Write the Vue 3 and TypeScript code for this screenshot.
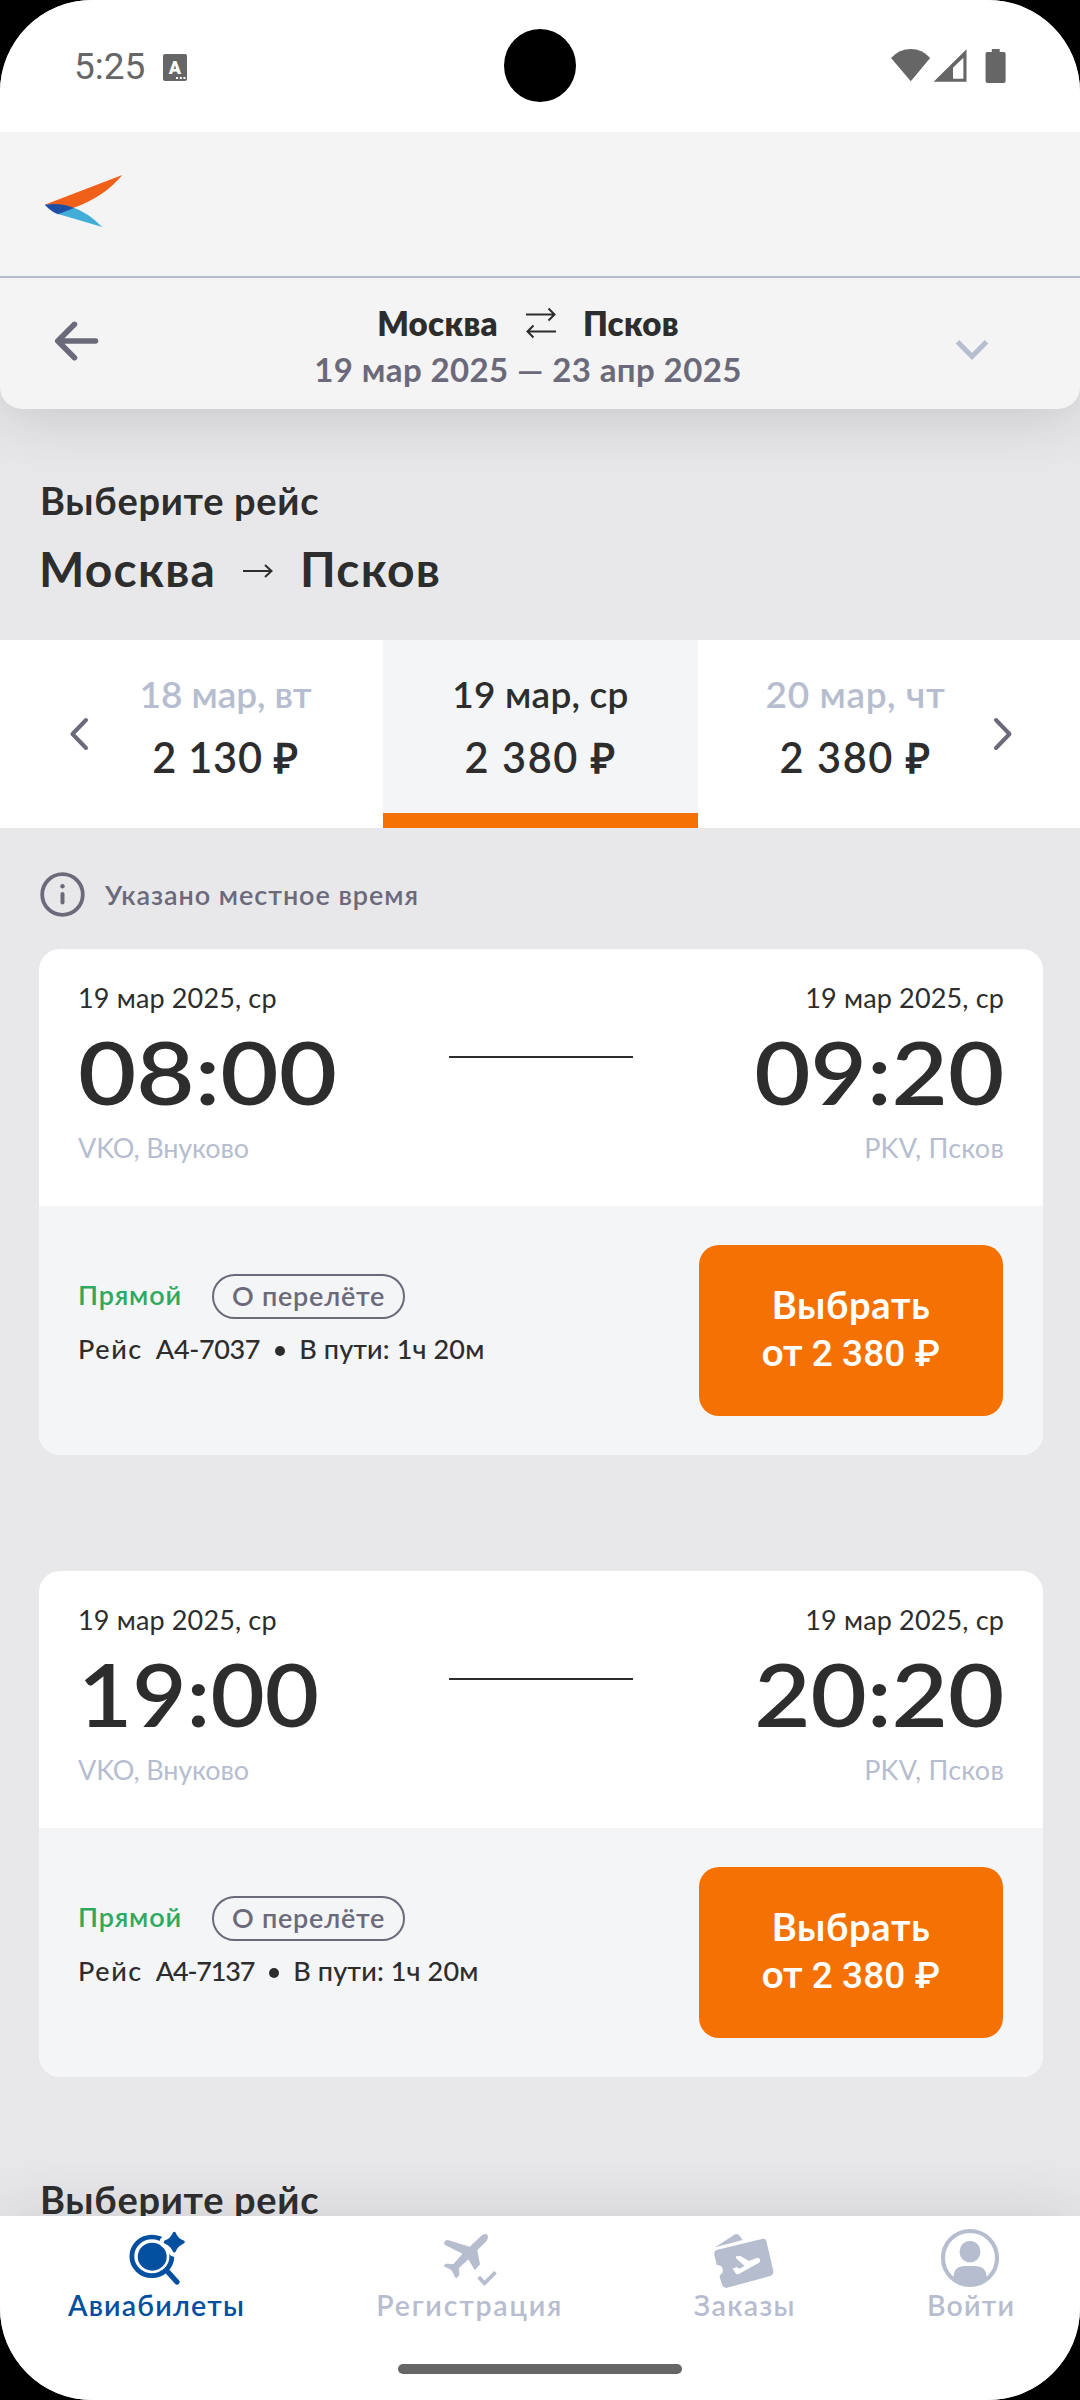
<script setup lang="ts">
interface DayPrice { date: string; price: string; active: boolean; dateSpacing: number; priceSpacing: number }
interface Clock { text: string; stretch: number }
interface Flight { number: string; numberSpacing: number; departure: Clock; arrival: Clock }
interface Tab { id: string; label: string; spacing: number; active: boolean }

const days: DayPrice[] = [
  { date: '18 мар, вт', price: '2 130 ₽', active: false, dateSpacing: -0.1, priceSpacing: 0.8 },
  { date: '19 мар, ср', price: '2 380 ₽', active: true, dateSpacing: 0.2, priceSpacing: 1.6 },
  { date: '20 мар, чт', price: '2 380 ₽', active: false, dateSpacing: 0.6, priceSpacing: 1.6 },
]

const flights: Flight[] = [
  { number: 'A4-7037', numberSpacing: -0.35, departure: { text: '08:00', stretch: 1.15 }, arrival: { text: '09:20', stretch: 1.11 } },
  { number: 'A4-7137', numberSpacing: -1.2, departure: { text: '19:00', stretch: 1.07 }, arrival: { text: '20:20', stretch: 1.11 } },
]

const tabs: Tab[] = [
  { id: 'search', label: 'Авиабилеты', spacing: 1.2, active: true },
  { id: 'checkin', label: 'Регистрация', spacing: 1.8, active: false },
  { id: 'orders', label: 'Заказы', spacing: 1.4, active: false },
  { id: 'profile', label: 'Войти', spacing: 1.2, active: false },
]

const px = (n: number) => `${n}px`
</script>

<template>
  <div class="device">
    <div class="screen">
      <div class="status">
        <span class="clock">5:25</span>
        <svg class="app-badge" viewBox="0 0 24 27">
          <rect width="24" height="27" rx="2" fill="#666" />
          <text x="12" y="19.500" text-anchor="middle" font-family="Roboto, sans-serif" font-weight="900" font-size="18" fill="#fff">A</text>
          <path d="M13 24h2M16.800 24h2M20.400 24h2" stroke="#fff" stroke-width="2.200" />
        </svg>
        <div class="camera"></div>
        <svg class="system-icons" viewBox="1016 144 338 108" preserveAspectRatio="none" fill="#666">
          <path d="M1019 174Q1043 147 1076 147T1132 174L1076 244Z" />
          <path fill-rule="evenodd" d="M1142 245L1237 148V245ZM1198 203V236H1228V173Z" />
          <path d="M1310 147H1333V156H1345Q1350 156 1350 161V243Q1350 249 1344 249H1298Q1292 249 1292 243V161Q1292 156 1297 156H1310Z" />
        </svg>
      </div>

      <header class="brand">
        <svg class="logo" viewBox="130 522 232 162" preserveAspectRatio="none">
          <path fill="#f16019" d="M132 614L357 525Q306 590 215 624Q180 611 132 614Z" />
          <path fill="#42aed8" d="M213 622Q256 637 299 681L171 642Z" />
          <path fill="#1f4fa3" d="M132 614Q180 607 217 624L171 643Q150 634 132 614Z" />
        </svg>
      </header>

      <div class="summary">
        <button class="back" aria-label="Назад">
          <svg viewBox="0 0 44 40" fill="none" stroke="#6b6a7b" stroke-width="5.500" stroke-linecap="round" stroke-linejoin="round">
            <path d="M40.500 20H2.800M19.500 3.300L2.800 20L19.500 36.700" />
          </svg>
        </button>
        <div class="trip">
          <div class="trip-route">
            <span>Москва</span>
            <svg class="swap" viewBox="0 0 30 28" fill="none" stroke="#2d2d2d" stroke-width="2">
              <path d="M0 7.500H28M22.500 1.500L28.500 7.500L22.500 13.500M30 24.500H2M7.500 18.500L1.500 24.500L7.500 30.500" />
            </svg>
            <span>Псков</span>
          </div>
          <div class="trip-dates">19 мар 2025 — 23 апр 2025</div>
        </div>
        <svg class="expand" viewBox="0 0 32 20" fill="none" stroke="#b6bdcf" stroke-width="5">
          <path d="M1.500 1.800L16 16.500L30.500 1.800" />
        </svg>
      </div>

      <main class="content">
        <h2 class="caption">Выберите рейс</h2>
        <h1 class="direction">
          <span>Москва</span>
          <svg viewBox="0 0 30 14" fill="none" stroke="#2d2d2d" stroke-width="2"><path d="M0 7H28M22 1L28.500 7L22 13" /></svg>
          <span>Псков</span>
        </h1>

        <div class="days">
          <svg class="arrow prev" viewBox="0 0 18 32" fill="none" stroke="#6b6a7b" stroke-width="4" stroke-linecap="round" stroke-linejoin="round"><path d="M16 2L2.500 16L16 30" /></svg>
          <div v-for="d in days" :key="d.date" class="day" :class="{ active: d.active }">
            <span class="day-date" :style="{ letterSpacing: px(d.dateSpacing) }">{{ d.date }}</span>
            <span class="day-price" :style="{ letterSpacing: px(d.priceSpacing) }">{{ d.price }}</span>
          </div>
          <svg class="arrow next" viewBox="0 0 18 32" fill="none" stroke="#6b6a7b" stroke-width="4" stroke-linecap="round" stroke-linejoin="round"><path d="M2 2L15.500 16L2 30" /></svg>
        </div>

        <div class="note">
          <svg viewBox="0 0 45 45" fill="none" stroke="#6b6a7b">
            <circle cx="22.500" cy="22.500" r="20.300" stroke-width="3.800" />
            <path d="M22.500 22V30.500" stroke-width="4" stroke-linecap="round" />
            <circle cx="22.500" cy="14.200" r="2.200" fill="#6b6a7b" stroke="none" />
          </svg>
          <span>Указано местное время</span>
        </div>

        <article v-for="f in flights" :key="f.number" class="card">
          <div class="schedule">
            <div class="point">
              <span class="point-date">19 мар 2025, ср</span>
              <span class="time" :style="{ transform: `scaleX(${f.departure.stretch})` }">{{ f.departure.text }}</span>
              <span class="airport from">VKO, Внуково</span>
            </div>
            <div class="path-line"></div>
            <div class="point end">
              <span class="point-date">19 мар 2025, ср</span>
              <span class="time" :style="{ transform: `scaleX(${f.arrival.stretch})` }">{{ f.arrival.text }}</span>
              <span class="airport to">PKV, Псков</span>
            </div>
          </div>
          <div class="offer">
            <div class="details">
              <div class="kind">
                <span class="direct">Прямой</span>
                <button class="about">О перелёте</button>
              </div>
              <div class="meta">
                <span class="meta-label">Рейс</span>
                <span class="meta-number" :style="{ letterSpacing: px(f.numberSpacing) }">{{ f.number }}</span>
                <i class="dot"></i>
                <span class="meta-duration">В пути: 1ч 20м</span>
              </div>
            </div>
            <button class="select">
              <span>Выбрать</span>
              <span class="from-price">от <b>2 380 ₽</b></span>
            </button>
          </div>
        </article>

        <h2 class="caption return">Выберите рейс</h2>
      </main>

      <nav class="tabbar">
        <div class="tabs">
          <a v-for="t in tabs" :key="t.id" class="tab" :class="{ active: t.active }">
            <svg v-if="t.id === 'search'" viewBox="359 264 180 180" preserveAspectRatio="none">
              <circle cx="437" cy="349" r="58" fill="none" stroke="currentColor" stroke-width="14" />
              <circle cx="438" cy="350" r="42" fill="currentColor" />
              <path d="M481 393L510 426" stroke="currentColor" stroke-width="15" stroke-linecap="round" />
              <path d="M502 280L512 296L528 306L512 317L502 333L492 317L476 306L492 296Z" fill="#fff" stroke="#fff" stroke-width="34" stroke-linejoin="round" />
              <path d="M502 280Q509 299 528 306Q509 314 502 333Q495 314 476 306Q495 299 502 280Z" fill="currentColor" stroke="currentColor" stroke-width="9" stroke-linejoin="round" />
            </svg>
            <svg v-else-if="t.id === 'checkin'" viewBox="1266 264 180 180" preserveAspectRatio="none" fill="currentColor">
              <path d="M1391 288Q1402 279 1409 284Q1414 292 1406 304L1380 331L1388 373L1373 391L1354 358L1327 384L1328 405L1320 414Q1315 415 1312 404Q1309 392 1300 387L1285 380Q1281 376 1290 371L1311 372L1337 341L1285 314Q1281 309 1287 303Q1291 299 1297 301L1358 320Z" />
              <path d="M1384 411L1401 430L1433 397" fill="none" stroke="currentColor" stroke-width="11" />
            </svg>
            <svg v-else-if="t.id === 'orders'" viewBox="502 264 180 180" preserveAspectRatio="none" fill="currentColor">
              <path d="M508 322L563 285Q571 278 579 287L588 300Z" />
              <path d="M512 330L647 296Q655 295 657 303L677 392Q679 403 668 408L543 443Q532 445 529 435L521 410Q521 404 527 401Q533 396 529 384Q527 376 513 375L506 345Q504 333 512 330Z" />
              <path fill="#fff" d="M569 349L581 348L607 363L628 354Q640 352 639 362Q639 367 633 370L577 402Q571 404 567 399L559 386L571 381L578 386L594 378L568 354Z" />
            </svg>
            <svg v-else viewBox="1164.500 264 180 180" preserveAspectRatio="none" fill="currentColor">
              <ellipse cx="1254.500" cy="354" rx="78.500" ry="81" fill="none" stroke="currentColor" stroke-width="12" />
              <ellipse cx="1254.500" cy="335" rx="30.500" ry="32" />
              <path d="M1207 414V410Q1208 378 1240 378H1270Q1301 378 1303 410V414Q1280 438 1254 438Q1228 438 1207 414Z" />
            </svg>
            <span :style="{ letterSpacing: px(t.spacing), marginRight: px(-t.spacing) }">{{ t.label }}</span>
          </a>
        </div>
        <div class="home-bar"></div>
      </nav>
    </div>
  </div>
</template>

<style>
body { background: #000; }
</style>

<style scoped>
.device { width: 1080px; height: 2400px; background: #000; font-family: Lato, 'Open Sans', sans-serif; color: #2d2d2d; }
.screen { display: flex; flex-direction: column; height: 2400px; border-radius: 92px; overflow: hidden; background: #e8e8ea; }
h1, h2 { margin: 0; font-size: inherit; }
button { border: 0; padding: 0; background: none; font: inherit; color: inherit; }
svg { display: block; flex: none; overflow: visible; }

.status { position: relative; flex: none; display: flex; align-items: center; height: 132px; padding: 0 73px 0 74px; background: #fff; }
.clock { font: 400 37px/44px Roboto, sans-serif; color: #666; width: 89px; padding-top: 1px; box-sizing: border-box; }
.app-badge { width: 24px; height: 27px; margin-top: 2px; }
.camera { position: absolute; left: 504px; top: 29px; width: 72px; height: 73px; border-radius: 50%; background: #000; }
.system-icons { width: 117px; height: 36px; margin-left: auto; }

.brand { flex: none; height: 144px; padding: 42px 0 0 44px; box-sizing: border-box; background: #f4f4f4; position: relative; z-index: 2; }
.logo { width: 80px; height: 54px; }

.summary { position: relative; z-index: 1; flex: none; display: flex; height: 133px; box-sizing: border-box; border-top: 2px solid #b6bbcb; background: #f4f4f4; border-bottom-left-radius: 22px; border-bottom-right-radius: 22px; box-shadow: 0 8px 60px rgba(60, 60, 70, 0.2); }
.back { width: 136px; padding: 43px 0 0 55px; display: flex; align-items: flex-start; }
.back svg { width: 44px; height: 40px; }
.trip { width: 784px; padding-top: 22px; display: flex; flex-direction: column; align-items: center; font-weight: 700; font-size: 33px; line-height: 46px; white-space: pre; }
.trip-route { display: flex; letter-spacing: 0.3px; font-weight: 800; }
.swap { width: 30px; height: 28px; margin: 7px 27px 0 28px; }
.trip-dates { letter-spacing: 0.4px; color: #6b6a7b; }
.expand { width: 32px; height: 20px; margin: 62px 0 0 36px; }

.content { flex: 1; min-height: 0; overflow: hidden; display: flex; flex-direction: column; }
.caption { flex: none; padding: 68px 40px 0 40px; font-weight: 700; font-size: 38px; line-height: 46px; letter-spacing: 0.7px; }
.caption.return { padding-top: 99px; margin-top: -116px; }
.direction { flex: none; display: flex; align-items: center; padding: 18px 39px 43px 39px; font-weight: 700; font-size: 48px; line-height: 56px; letter-spacing: 1.2px; }
.direction svg { width: 30px; height: 14px; margin: 3px 27px 0 27px; }

.days { flex: none; display: grid; grid-template-columns: 68px 315px 315px 315px 67px; height: 188px; background: #fff; }
.day { display: flex; flex-direction: column; align-items: center; padding-top: 30px; box-sizing: border-box; white-space: pre; font-weight: 600; }
.day-date { font-size: 37px; line-height: 48px; color: #b6bdcf; }
.day-price { margin-top: 11px; font-size: 41.5px; line-height: 56px; }
.day.active { background: #f4f5f7; border-bottom: 15px solid #f57103; }
.day.active .day-date { color: #2d2d2d; }
.arrow { width: 18px; height: 32px; margin-top: 78px; }
.prev { margin-left: 70px; }
.next { margin-left: -19px; }

.note { flex: none; display: flex; align-items: center; gap: 20px; padding: 44px 40px 32px; color: #6b6a7b; font-weight: 600; font-size: 27px; line-height: 32px; letter-spacing: 0.94px; }
.note svg { width: 45px; height: 45px; }

.card { flex: none; margin: 0 37px 116px 39px; height: 506px; border-radius: 21px; overflow: hidden; background: #fff; }
.schedule { display: grid; grid-template-columns: 1fr 184px 1fr; height: 257px; padding: 33px 39px 0; box-sizing: border-box; }
.point { display: flex; flex-direction: column; align-items: flex-start; font-size: 27px; line-height: 32px; }
.point.end { align-items: flex-end; }
.point-date { letter-spacing: 0.15px; }
.time { margin-top: 18px; margin-bottom: 20px; font-weight: 600; font-size: 87.5px; line-height: 80px; transform-origin: left center; }
.end .time { transform-origin: right center; }
.airport { color: #b6bdcf; }
.from { letter-spacing: -0.15px; }
.to { letter-spacing: 0.2px; }
.path-line { height: 2px; margin-top: 74px; background: #2d2d2d; }

.offer { display: flex; justify-content: space-between; height: 249px; padding: 39px 40px 0 39px; box-sizing: border-box; background: #f4f5f7; font-size: 27px; line-height: 32px; }
.details { padding-top: 29px; }
.kind { display: flex; }
.direct { width: 134px; padding-top: 5px; color: #2eaa60; font-weight: 600; letter-spacing: 0.9px; }
.about { width: 193px; height: 45px; box-sizing: border-box; border: 2px solid #6b6a7b; border-radius: 23px; color: #6b6a7b; font-weight: 600; letter-spacing: 0.77px; padding-bottom: 1px; line-height: 32px; }
.meta { display: flex; align-items: center; margin-top: 14px; font-weight: 500; white-space: pre; }
.meta-label { letter-spacing: 1.6px; margin: 0 13px 0 0; }
.dot { width: 10px; height: 10px; margin: 3px 14px 0 15px; border-radius: 50%; background: #2d2d2d; }
.meta-duration { letter-spacing: 0.13px; }
.select { display: flex; flex-direction: column; align-items: center; justify-content: center; width: 304px; height: 171px; padding-bottom: 3px; box-sizing: border-box; border-radius: 20px; background: #f57103; color: #fff; font-weight: 700; font-size: 38px; line-height: 47px; letter-spacing: 0.7px; }
.from-price { letter-spacing: 0; white-space: pre; }
.from-price b { font: 500 37px/47px Roboto, sans-serif; letter-spacing: 0.1px; }

.tabbar { position: relative; flex: none; height: 184px; padding: 12px 66px 0 68px; box-sizing: border-box; background: #fff; box-shadow: 0 0 60px rgba(60, 60, 70, 0.16); }
.tabs { display: flex; justify-content: space-between; }
.tab { display: flex; flex-direction: column; align-items: center; color: #b6bdcf; font-weight: 600; font-size: 28.5px; line-height: 35px; }
.tab svg { width: 62px; height: 60px; }
.tab.active { color: #0450a0; }
.home-bar { width: 284px; height: 10px; margin: 41px auto 0 330px; border-radius: 5px; background: #666; }
</style>
